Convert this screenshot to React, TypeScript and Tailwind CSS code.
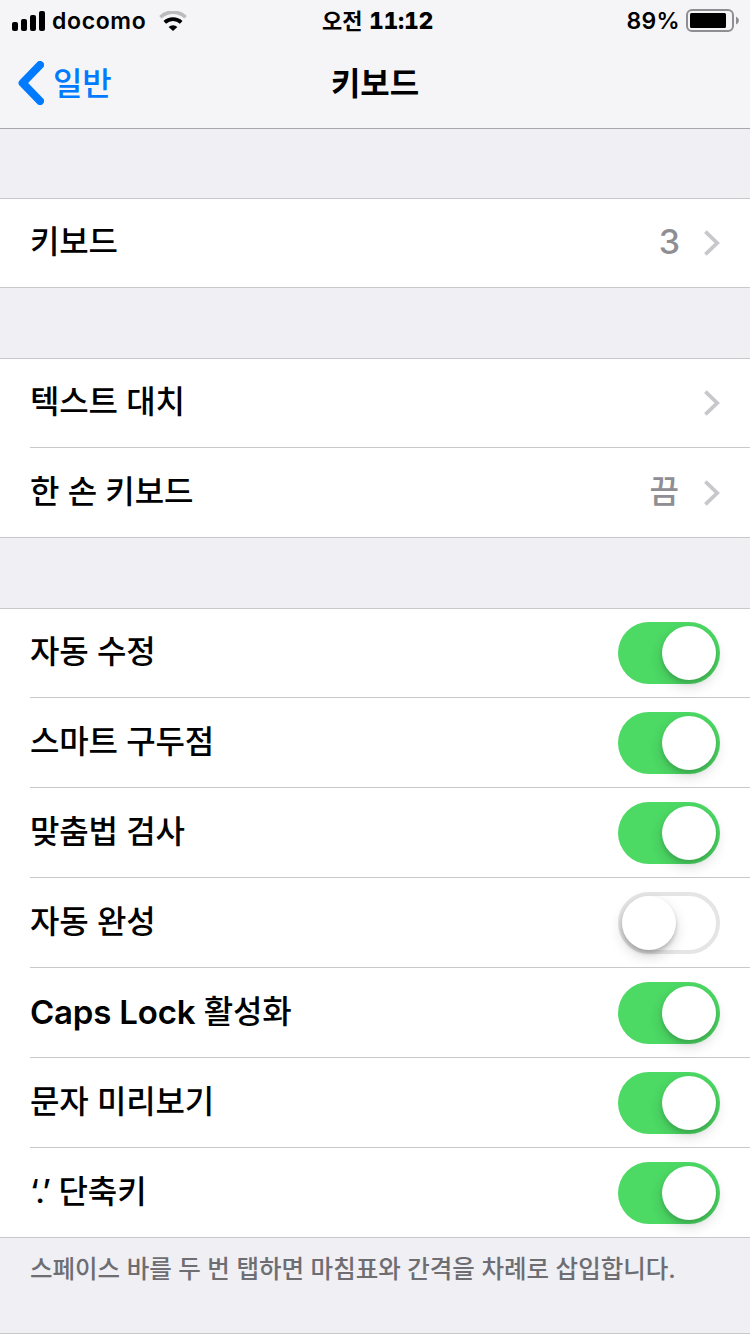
import React from "react";

function Chevron() {
  return (
    <svg className="ml-[24px] h-[28px] w-[17px]" viewBox="0 0 17 28" fill="none">
      <path d="M2.4 2.6 L14.2 14 L2.4 25.4" stroke="#c7c7cc" strokeWidth="3.8" />
    </svg>
  );
}

function Toggle({ on }: { on: boolean }) {
  return on ? (
    <div className="flex h-[62px] w-[102px] items-center justify-end rounded-full bg-[#4cd964] pr-[4px]">
      <div className="h-[54px] w-[54px] rounded-full bg-white shadow-[0_6px_14px_rgba(0,0,0,0.16),0_3px_4px_rgba(0,0,0,0.12)]" />
    </div>
  ) : (
    <div className="flex h-[62px] w-[102px] items-center rounded-full border-[4px] border-[#e5e5e5] bg-white">
      <div className="h-[54px] w-[54px] rounded-full bg-white shadow-[0_6px_14px_rgba(0,0,0,0.16),0_3px_4px_rgba(0,0,0,0.2)]" />
    </div>
  );
}

function Row({ label, children }: { label: React.ReactNode; children: React.ReactNode }) {
  return (
    <div className="group h-[90px] pl-[30px] first:h-[89px] last:pl-0">
      <div className="flex h-full items-start justify-between border-b border-[#c8c7cc] pt-[14px] pr-[30px] group-first:pt-[13px] group-last:pl-[30px]">
        <span className="flex h-[60px] items-center text-[32px] leading-[44px] tracking-[-0.15px] whitespace-pre">{label}</span>
        <div className="flex h-[62px] items-center">{children}</div>
      </div>
    </div>
  );
}

function Group({ children }: { children: React.ReactNode }) {
  return <div className="border-t border-[#c8c7cc] bg-white">{children}</div>;
}

function StatusBar() {
  return (
    <div className="grid h-[41px] grid-cols-3 items-center text-[23px] leading-[28px] font-semibold">
      <div className="flex items-center pl-[12px]">
        <svg className="h-[20px] w-[33px]" viewBox="0 0 33 20">
          <rect x="0" y="11" width="6" height="9" rx="2" />
          <rect x="9" y="8" width="6" height="12" rx="2" />
          <rect x="18" y="4" width="6" height="16" rx="2" />
          <rect x="27" y="0" width="6" height="20" rx="2" />
        </svg>
        <span className="ml-[7px] tracking-[0.65px]">docomo</span>
        <svg className="ml-[13px] h-[20px] w-[28px]" viewBox="0 0 28 20" fill="none">
          <path d="M1.4 6.2 A18.2 18.2 0 0 1 26.6 6.2" stroke="#bcbcbe" strokeWidth="3.6" />
          <path d="M5.8 11.3 A12 12 0 0 1 22.2 11.3" stroke="#000" strokeWidth="3.8" />
          <path d="M14 20 L9.6 15.9 A6.4 6.4 0 0 1 18.4 15.9 Z" fill="#000" />
        </svg>
      </div>
      <div className="flex items-center justify-center whitespace-pre pl-[5px]">
        <span className="text-[22px]">오전 </span>
        <span className="ml-px font-extrabold tracking-[-0.3px] tabular-nums">11:12</span>
      </div>
      <div className="flex items-center justify-end pr-[11px]">
        <span className="tracking-[0.3px]">89%</span>
        <svg className="ml-[6px] h-[24px] w-[53px]" viewBox="0 0 53 24" fill="none">
          <rect x="1" y="1" width="46" height="21" rx="5" stroke="#8f8f91" strokeWidth="2" />
          <rect x="4" y="4" width="36" height="15" rx="1.5" fill="#000" />
          <path d="M50 7.5 Q53 9 53 11.5 Q53 14 50 15.5 Z" fill="#8f8f91" />
        </svg>
      </div>
    </div>
  );
}

export default function App() {
  return (
    <div className="flex h-[1334px] w-[750px] flex-col overflow-hidden bg-[#efeff4] font-['Inter','Noto_Sans_CJK_KR',sans-serif] font-medium text-black">
      <header className="h-[129px] shrink-0 border-b border-[#a7a7ac] bg-[#f5f5f7]">
        <StatusBar />
        <nav className="grid h-[84px] grid-cols-3 items-center text-[32px] leading-[44px] tracking-[-0.15px]">
          <div className="flex items-center pl-[18px] text-[#007aff]">
            <svg className="h-[44px] w-[26px]" viewBox="0 0 26 44" fill="none">
              <path d="M22 4 L4.6 22 L22 40" stroke="#007aff" strokeWidth="8" strokeLinecap="round" strokeLinejoin="round" />
            </svg>
            <span className="mt-[2px] ml-[9px]">일반</span>
          </div>
          <h1 className="mt-[2px] text-center font-bold">키보드</h1>
        </nav>
      </header>
      <main className="flex flex-col gap-[70px] pt-[69px]">
        <Group>
          <Row label="키보드">
            <span className="-mt-[2px] mr-[-1px] text-[34px] leading-[44px] text-[#8e8e93]">3</span>
            <Chevron />
          </Row>
        </Group>
        <Group>
          <Row label="텍스트 대치">
            <Chevron />
          </Row>
          <Row label="한 손 키보드">
            <span className="-mt-[2px] text-[32px] leading-[44px] text-[#8e8e93]">끔</span>
            <Chevron />
          </Row>
        </Group>
        <div>
          <Group>
            <Row label="자동 수정"><Toggle on /></Row>
            <Row label="스마트 구두점"><Toggle on /></Row>
            <Row label="맞춤법 검사"><Toggle on /></Row>
            <Row label="자동 완성"><Toggle on={false} /></Row>
            <Row label={<><span className="text-[33px] font-semibold tracking-[-0.2px]">Caps Lock</span> 활성화</>}><Toggle on /></Row>
            <Row label="문자 미리보기"><Toggle on /></Row>
            <Row label={<><span className="tracking-[-0.7px]">‘.’</span> 단축키</>}><Toggle on /></Row>
          </Group>
          <p className="h-[95px] pt-[13px] pl-[30px] text-[24.5px] leading-[36px] whitespace-nowrap text-[#6d6d72]">
            스페이스 바를 두 번 탭하면 마침표와 간격을 차례로 삽입합니다.
          </p>
          <div className="h-px bg-[#c8c7cc]" />
        </div>
      </main>
    </div>
  );
}
